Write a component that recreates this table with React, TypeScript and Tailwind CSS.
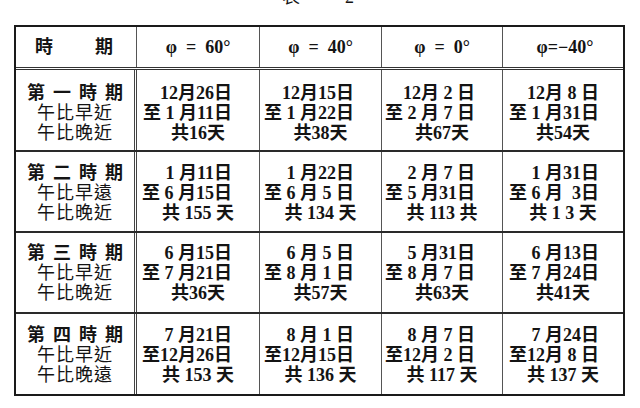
import React from "react";

type Cell = [string, string, string];

const rows: { label: Cell; cells: Cell[]; h: string; pt: string }[] = [
  {
    label: ["第一時期", "午比早近", "午比晚近"],
    cells: [
      ["12月26日", "至 1 月11日", "共16天"],
      ["12月15日", "至 1 月22日", "共38天"],
      ["12月 2 日", "至 2 月 7 日", "共67天"],
      ["12月 8 日", "至 1 月31日", "共54天"],
    ],
    h: "h-[82px]",
    pt: "pt-[13px]",
  },
  {
    label: ["第二時期", "午比早遠", "午比晚近"],
    cells: [
      ["1 月11日", "至 6 月15日", "共 155 天"],
      ["1 月22日", "至 6 月 5 日", "共 134 天"],
      ["2 月 7 日", "至 5 月31日", "共 113 共"],
      ["1 月31日", "至 6 月  3日", "共 1 3 天"],
    ],
    h: "h-[81px]",
    pt: "pt-[11px]",
  },
  {
    label: ["第三時期", "午比早近", "午比晚近"],
    cells: [
      ["6 月15日", "至 7 月21日", "共36天"],
      ["6 月 5 日", "至 8 月 1 日", "共57天"],
      ["5 月31日", "至 8 月 7 日", "共63天"],
      ["6 月13日", "至 7 月24日", "共41天"],
    ],
    h: "h-[81px]",
    pt: "pt-[10px]",
  },
  {
    label: ["第四時期", "午比早近", "午比晚遠"],
    cells: [
      ["7 月21日", "至12月26日", "共 153 天"],
      ["8 月 1 日", "至12月15日", "共 136 天"],
      ["8 月 7 日", "至12月 2 日", "共 117 天"],
      ["7 月24日", "至12月 8 日", "共 137 天"],
    ],
    h: "h-[80px]",
    pt: "pt-[11px]",
  },
];

const font = "font-['Liberation_Serif','Noto_Sans_CJK_TC',serif]";

export default function App() {
  return (
    <div className={`w-[640px] h-[408px] bg-white text-[#141414] overflow-hidden ${font}`}>
      <div className="h-[25px] flex items-start pl-[282px] gap-[45px] text-[18px] leading-[18px]">
        <span className="-mt-[12px]">表</span>
        <span className="-mt-[12px]">2</span>
      </div>
      <div className="ml-[14px] w-[611px] border-2 border-[#1a1a1a]">
        <div className="grid grid-cols-[121px_123px_122px_121px_120px] h-[43px] border-b-[3px] border-double border-[#333]">
          <div className="flex items-center justify-between pl-[19px] pr-[23px] border-r border-[#555] text-[18px] font-bold">
            <span>時</span>
            <span>期</span>
          </div>
          <div className="flex items-center justify-center border-r border-[#555] text-[18px] font-bold whitespace-pre">
            φ  =  60°
          </div>
          <div className="flex items-center justify-center border-r border-[#555] text-[18px] font-bold whitespace-pre">
            φ  =  40°
          </div>
          <div className="flex items-center justify-center border-r border-[#555] text-[18px] font-bold whitespace-pre">
            φ  =  0°
          </div>
          <div className="flex items-center justify-center text-[18px] font-bold whitespace-pre pl-[4px]">
            φ=−40°
          </div>
        </div>
        {rows.map((r, i) => (
          <div
            key={i}
            className={`grid grid-cols-[121px_123px_122px_121px_120px] ${r.h} ${
              i < rows.length - 1 ? "border-b-2 border-[#2a2a2a]" : ""
            }`}
          >
            <div
              className={`flex flex-col items-center ${r.pt} border-r-[3px] border-double border-[#444] text-[18px] leading-[20px]`}
            >
              <span className="font-bold tracking-[8px] -mr-[8px]">{r.label[0]}</span>
              <span className="tracking-[1px]">{r.label[1]}</span>
              <span className="tracking-[1px]">{r.label[2]}</span>
            </div>
            {r.cells.map((c, j) => (
              <div
                key={j}
                className={`flex flex-col ${r.pt} ${j < 3 ? "border-r border-[#555]" : ""} text-[18px] leading-[20px] whitespace-pre font-semibold`}
              >
                <span className={`text-right ${j === 3 ? "pr-[24px]" : "pr-[27px]"}`}>{c[0]}</span>
                <span className={`text-right ${j === 3 ? "pr-[24px]" : "pr-[27px]"}`}>{c[1]}</span>
                <span className="text-center">{c[2]}</span>
              </div>
            ))}
          </div>
        ))}
      </div>
    </div>
  );
}
